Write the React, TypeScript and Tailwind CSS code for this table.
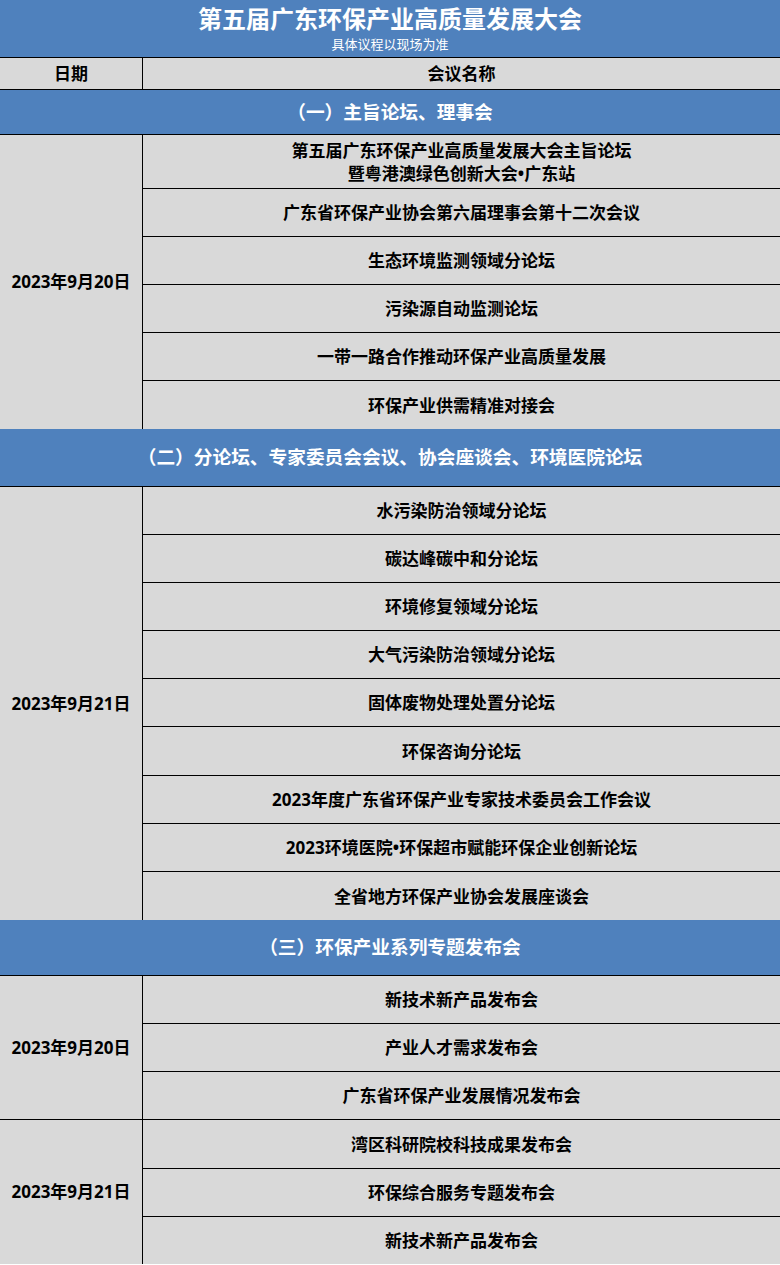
const groups = [
  {
    title: '（一）主旨论坛、理事会',
    h: 45,
    blocks: [
      {
        date: '2023年9月20日',
        rows: [
          { text: ['第五届广东环保产业高质量发展大会主旨论坛', '暨粤港澳绿色创新大会•广东站'], h: 54 },
          { text: ['广东省环保产业协会第六届理事会第十二次会议'], h: 48 },
          { text: ['生态环境监测领域分论坛'], h: 48 },
          { text: ['污染源自动监测论坛'], h: 48 },
          { text: ['一带一路合作推动环保产业高质量发展'], h: 48 },
          { text: ['环保产业供需精准对接会'], h: 49 },
        ],
      },
    ],
  },
  {
    title: '（二）分论坛、专家委员会会议、协会座谈会、环境医院论坛',
    h: 58,
    blocks: [
      {
        date: '2023年9月21日',
        rows: [
          { text: ['水污染防治领域分论坛'], h: 48 },
          { text: ['碳达峰碳中和分论坛'], h: 48 },
          { text: ['环境修复领域分论坛'], h: 48 },
          { text: ['大气污染防治领域分论坛'], h: 48 },
          { text: ['固体废物处理处置分论坛'], h: 48 },
          { text: ['环保咨询分论坛'], h: 49 },
          { text: ['2023年度广东省环保产业专家技术委员会工作会议'], h: 48 },
          { text: ['2023环境医院•环保超市赋能环保企业创新论坛'], h: 48 },
          { text: ['全省地方环保产业协会发展座谈会'], h: 49 },
        ],
      },
    ],
  },
  {
    title: '（三）环保产业系列专题发布会',
    h: 56,
    blocks: [
      {
        date: '2023年9月20日',
        rows: [
          { text: ['新技术新产品发布会'], h: 48 },
          { text: ['产业人才需求发布会'], h: 48 },
          { text: ['广东省环保产业发展情况发布会'], h: 48 },
        ],
      },
      {
        date: '2023年9月21日',
        rows: [
          { text: ['湾区科研院校科技成果发布会'], h: 49 },
          { text: ['环保综合服务专题发布会'], h: 48 },
          { text: ['新技术新产品发布会'], h: 48 },
        ],
      },
    ],
  },
];

export default function App() {
  return (
    <div
      className="w-[780px] bg-[#d9d9d9] text-black"
      style={{ fontFamily: '"Noto Sans", "Noto Sans CJK SC", sans-serif' }}
    >
      <div className="flex h-[58px] flex-col items-center border-b border-black bg-[#4f81bd] text-white">
        <div className="mt-[4px] text-[24px] font-bold leading-[30px]">第五届广东环保产业高质量发展大会</div>
        <div className="mt-[2px] text-[13px] leading-[16px]">具体议程以现场为准</div>
      </div>

      <div className="flex h-[32px] border-b border-black text-[17px] font-bold">
        <div className="flex w-[143px] items-center justify-center border-r border-black">日期</div>
        <div className="flex flex-1 items-center justify-center">会议名称</div>
      </div>

      {groups.map((g) => (
        <div key={g.title}>
          <div
            className="flex items-center justify-center border-b border-black bg-[#4f81bd] text-[18.7px] font-bold text-white"
            style={{ height: g.h }}
          >
            {g.title}
          </div>
          {g.blocks.map((b, bi) => (
            <div key={bi} className="flex border-b border-black last:border-b-0">
              <div className="flex w-[143px] shrink-0 items-center justify-center border-r border-black text-[17px] font-bold">
                {b.date}
              </div>
              <div className="flex flex-1 flex-col">
                {b.rows.map((r, ri) => (
                  <div
                    key={ri}
                    className="flex flex-col items-center justify-center border-b border-black text-[17px] font-bold leading-[23px] last:border-b-0"
                    style={{ height: ri === b.rows.length - 1 ? r.h - 1 : r.h }}
                  >
                    {r.text.map((t) => (
                      <div key={t}>{t}</div>
                    ))}
                  </div>
                ))}
              </div>
            </div>
          ))}
        </div>
      ))}
    </div>
  );
}
